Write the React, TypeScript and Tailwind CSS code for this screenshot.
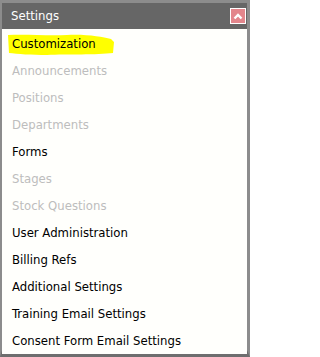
import React from 'react';

type Item = { label: string; disabled?: boolean; highlight?: boolean };

const items: Item[] = [
  { label: 'Customization', highlight: true },
  { label: 'Announcements', disabled: true },
  { label: 'Positions', disabled: true },
  { label: 'Departments', disabled: true },
  { label: 'Forms' },
  { label: 'Stages', disabled: true },
  { label: 'Stock Questions', disabled: true },
  { label: 'User Administration' },
  { label: 'Billing Refs' },
  { label: 'Additional Settings' },
  { label: 'Training Email Settings' },
  { label: 'Consent Form Email Settings' },
];

function Highlight() {
  return (
    <svg
      className="pointer-events-none absolute left-[5px] top-[3px] h-[23px] w-[108px]"
      viewBox="0 0 108 23"
      aria-hidden
    >
      <path
        d="M1 2 C20 1 40 3 60 2 C80 1 95 4 104 6 L107 9 L106 20 C90 22 60 21 40 22 C25 22 10 21 2 20 Z"
        fill="#ffff00"
      />
    </svg>
  );
}

export default function App() {
  return (
    <div className="h-[357px] w-[250px] bg-white font-['DejaVu_Sans_Condensed','DejaVu_Sans',sans-serif]">
      <div className="flex h-full flex-col border-l-2 border-r-[3px] border-t-[3px] border-b-[7px] border-l-[#8c8c8c] border-r-[#8c8c8c] border-t-[#8c8c8c] border-b-[#6e6e6e]">
        <header className="flex h-[26px] shrink-0 items-center justify-between bg-[#666666] pl-[9px] pr-[1px]">
          <span className="text-[13px] text-white">Settings</span>
          <button className="flex h-[16px] w-[16px] items-center justify-center border border-white bg-[#e3868c]">
            <svg width="10" height="8" viewBox="0 0 10 8" aria-hidden>
              <path d="M1.5 6.5 L5 3 L8.5 6.5" stroke="white" strokeWidth="2.4" fill="none" />
            </svg>
          </button>
        </header>
        <ul className="flex-1 bg-[#fffffc] pt-[1px]">
          {items.map((it) => (
            <li
              key={it.label}
              className={
                'relative flex h-[27px] items-center pl-[10px] text-[13px] ' +
                (it.disabled ? 'text-[#bdbdbd]' : 'text-black')
              }
            >
              {it.highlight && <Highlight />}
              <span className="relative">{it.label}</span>
            </li>
          ))}
        </ul>
      </div>
    </div>
  );
}
